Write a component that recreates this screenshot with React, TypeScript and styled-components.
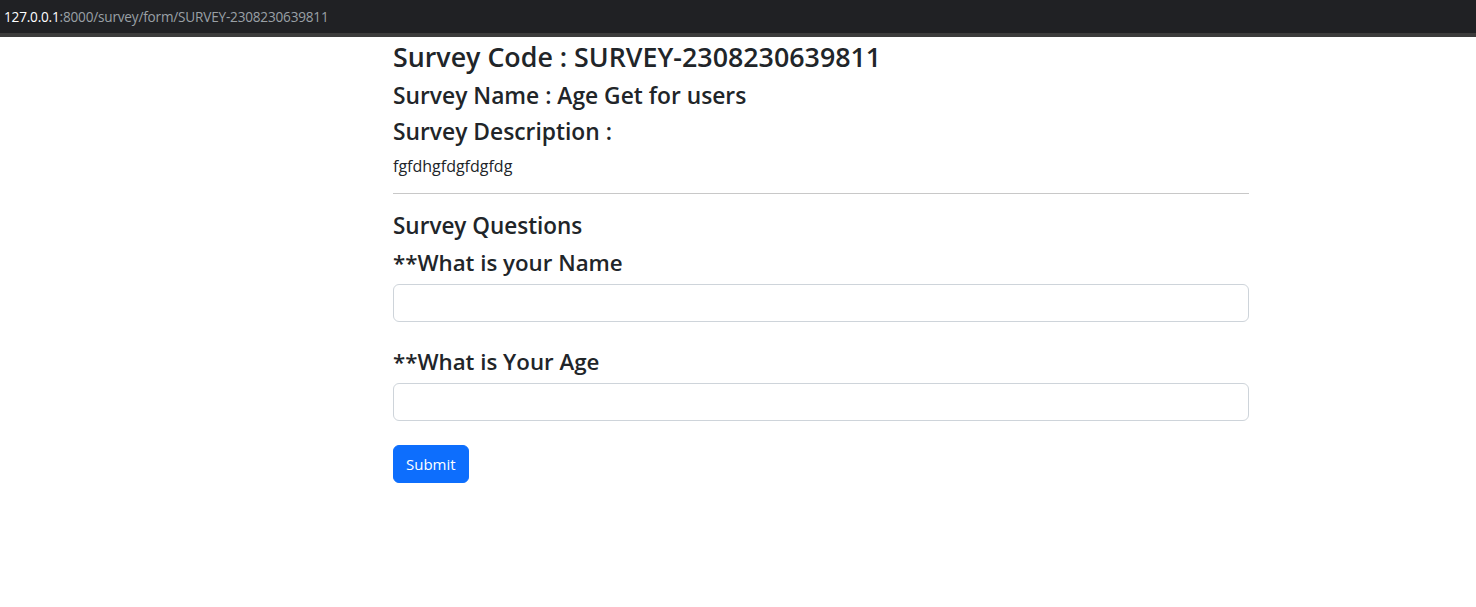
import React from "react";
import styled, { createGlobalStyle } from "styled-components";

const Global = createGlobalStyle`
  html, body { margin: 0; padding: 0; background: #fff; }
  body { font-family: "Open Sans", "Noto Sans", sans-serif; color: #212529; }
  * { box-sizing: border-box; }
`;

const AddressBar = styled.div`
  height: 37px;
  background: #202124;
  border-bottom: 4px solid #3c3c3c;
  display: flex;
  align-items: center;
  padding: 0 0 1px 4px;
  font-family: "Open Sans", sans-serif;
  font-size: 13.6px;
  letter-spacing: -0.2px;
`;

const Host = styled.span`
  color: #ffffff;
`;

const Path = styled.span`
  color: #9aa0a6;
`;

const Page = styled.div`
  display: grid;
  grid-template-columns: 393px 856px 1fr;
`;

const Container = styled.main`
  grid-column: 2;
  display: flex;
  flex-direction: column;
  align-items: stretch;
  padding-top: 3px;
`;

const CodeTitle = styled.h3`
  font-size: 26.8px;
  font-weight: 600;
  line-height: 34px;
  margin: 0 0 7px;
`;

const InfoTitle = styled.h4`
  font-size: 22.8px;
  font-weight: 600;
  line-height: 29px;
  margin: 0 0 7px;
`;

const Desc = styled.p`
  font-size: 16px;
  line-height: 24px;
  margin: 1px 0 15px;
`;

const Rule = styled.hr`
  border: 0;
  border-top: 1px solid #c8c8c8;
  margin: 0 0 17px;
`;

const SectionTitle = styled.h4`
  font-size: 22.5px;
  font-weight: 600;
  line-height: 30px;
  margin: 0 0 7px;
`;

const Field = styled.div`
  & + & {
    margin-top: 25px;
  }
`;

const QuestionLabel = styled.label`
  display: block;
  font-size: 22.3px;
  font-weight: 600;
  line-height: 30px;
  margin-bottom: 6px;
`;

const Input = styled.input`
  display: block;
  width: 100%;
  height: 38px;
  border: 1px solid #ced4da;
  border-radius: 6px;
  padding: 6px 12px;
  font-size: 16px;
`;

const Actions = styled.div`
  display: flex;
  margin-top: 24px;
`;

const Button = styled.button`
  background: #0d6efd;
  color: #fff;
  border: 1px solid #0d6efd;
  border-radius: 6px;
  height: 38px;
  padding: 0 12px;
  font-family: "Open Sans", sans-serif;
  font-size: 15px;
`;

export default function App() {
  return (
    <>
      <Global />
      <AddressBar>
        <Host>127.0.0.1</Host>
        <Path>:8000/survey/form/SURVEY-2308230639811</Path>
      </AddressBar>
      <Page>
        <Container>
          <CodeTitle>Survey Code : SURVEY-2308230639811</CodeTitle>
          <InfoTitle>Survey Name : Age Get for users</InfoTitle>
          <InfoTitle>Survey Description :</InfoTitle>
          <Desc>fgfdhgfdgfdgfdg</Desc>
          <Rule />
          <SectionTitle>Survey Questions</SectionTitle>
          <Field>
            <QuestionLabel>**What is your Name</QuestionLabel>
            <Input type="text" />
          </Field>
          <Field>
            <QuestionLabel>**What is Your Age</QuestionLabel>
            <Input type="text" />
          </Field>
          <Actions>
            <Button>Submit</Button>
          </Actions>
        </Container>
      </Page>
    </>
  );
}
